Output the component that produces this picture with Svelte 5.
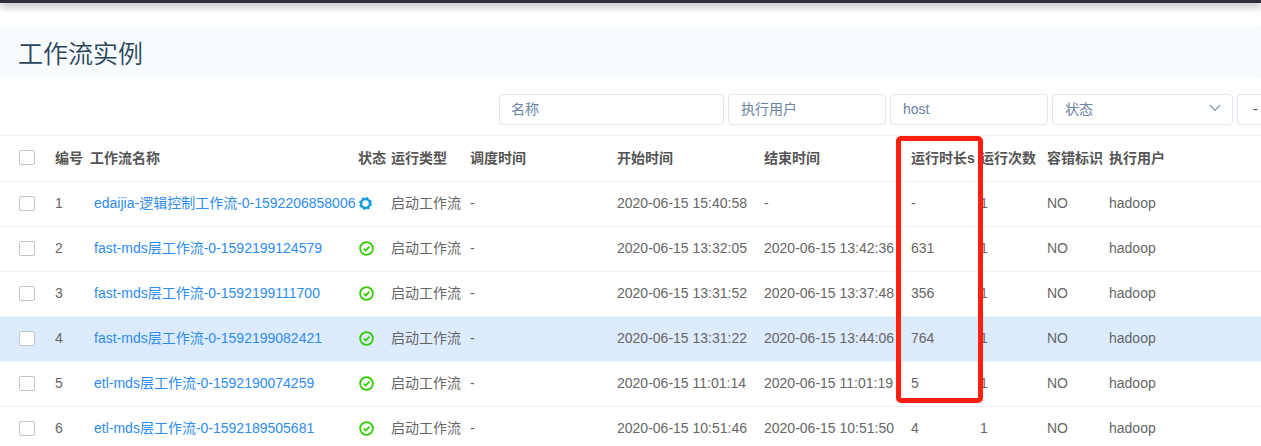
<script lang="ts">
  interface Instance {
    id: number;
    name: string;
    state: "running" | "success";
    start: string;
    end: string;
    duration: string;
    host: string;
  }

  const instances: Instance[] = [
    { id: 1, name: "edaijia-逻辑控制工作流-0-1592206858006", state: "running", start: "2020-06-15 15:40:58", end: "-", duration: "-", host: "hadoop" },
    { id: 2, name: "fast-mds层工作流-0-1592199124579", state: "success", start: "2020-06-15 13:32:05", end: "2020-06-15 13:42:36", duration: "631", host: "hadoop" },
    { id: 3, name: "fast-mds层工作流-0-1592199111700", state: "success", start: "2020-06-15 13:31:52", end: "2020-06-15 13:37:48", duration: "356", host: "hadoop" },
    { id: 4, name: "fast-mds层工作流-0-1592199082421", state: "success", start: "2020-06-15 13:31:22", end: "2020-06-15 13:44:06", duration: "764", host: "hadoop" },
    { id: 5, name: "etl-mds层工作流-0-1592190074259", state: "success", start: "2020-06-15 11:01:14", end: "2020-06-15 11:01:19", duration: "5", host: "hadoop" },
    { id: 6, name: "etl-mds层工作流-0-1592189505681", state: "success", start: "2020-06-15 10:51:46", end: "2020-06-15 10:51:50", duration: "4", host: "hadoop" },
  ];

  let active = $state(4);
  let selected: number[] = $state([]);
  let name = $state("");
  let user = $state("");
  let host = $state("");
  let range = $state("-");

  const toggleAll = () => {
    selected = selected.length === instances.length ? [] : instances.map((i) => i.id);
  };
</script>

<div class="page">
  <div class="navbar"></div>

  <h1 class="title">工作流实例</h1>

  <form class="filters">
    <input class="field name" type="text" placeholder="名称" aria-label="名称" bind:value={name} />
    <input class="field" type="text" placeholder="执行用户" aria-label="执行用户" bind:value={user} />
    <input class="field" type="text" placeholder="host" aria-label="host" bind:value={host} />
    <div class="select-box">
      <select class="field" aria-label="状态">
        <option>状态</option>
      </select>
      <svg class="arrow" viewBox="0 0 12 8" width="12" height="8">
        <path d="M1 1.2 6 6.4 11 1.2" />
      </svg>
    </div>
    <input class="field range" type="text" aria-label="时间" readonly bind:value={range} />
  </form>

  <table>
    <colgroup>
      <col class="c-check" />
      <col class="c-id" />
      <col class="c-name" />
      <col class="c-state" />
      <col class="c-type" />
      <col class="c-time" />
      <col class="c-time" />
      <col class="c-time" />
      <col class="c-duration" />
      <col class="c-count" />
      <col class="c-fault" />
      <col />
    </colgroup>
    <thead>
      <tr>
        <th class="check">
          <input
            type="checkbox"
            aria-label="全选"
            checked={selected.length === instances.length}
            onchange={toggleAll}
          />
        </th>
        <th>编号</th>
        <th>工作流名称</th>
        <th>状态</th>
        <th>运行类型</th>
        <th>调度时间</th>
        <th>开始时间</th>
        <th>结束时间</th>
        <th class="marked">运行时长s<span class="marker"></span></th>
        <th>运行次数</th>
        <th>容错标识</th>
        <th>执行用户</th>
      </tr>
    </thead>
    <tbody>
      {#each instances as item (item.id)}
        <tr class:active={active === item.id} onmouseenter={() => (active = item.id)}>
          <td class="check">
            <input type="checkbox" aria-label={item.name} value={item.id} bind:group={selected} />
          </td>
          <td>{item.id}</td>
          <td class="link"><a href="#{item.id}">{item.name}</a></td>
          <td class="state">
            {#if item.state === "running"}
              <svg viewBox="0 0 16 16" width="15" height="15">
                <circle class="teeth" cx="8" cy="8" r="5.9" />
                <circle class="gear" cx="8" cy="8" r="4.7" />
              </svg>
            {:else}
              <svg viewBox="0 0 16 16" width="17" height="17">
                <circle class="ring" cx="8" cy="8" r="6" />
                <path class="tick" d="M5.3 8.1 7.3 9.9 10.7 6.2" />
              </svg>
            {/if}
          </td>
          <td>启动工作流</td>
          <td>-</td>
          <td>{item.start}</td>
          <td>{item.end}</td>
          <td>{item.duration}</td>
          <td>1</td>
          <td>NO</td>
          <td>{item.host}</td>
        </tr>
      {/each}
    </tbody>
  </table>
</div>

<style>
  .page {
    height: 100vh;
    overflow: hidden;
    background: #fff;
    color: #666;
    font-family: "Liberation Sans", Arial, "Noto Sans CJK SC", sans-serif;
    font-size: 14px;
  }

  .navbar {
    height: 3px;
    background: #2d303c;
    box-shadow: 0 2px 8px rgba(0, 0, 0, 0.6);
  }

  .title {
    margin: 22px 0 15px;
    padding-left: 18px;
    height: 54px;
    line-height: 58px;
    border-radius: 3px;
    background: #f7fbfe;
    color: #2a455b;
    font-size: 25px;
    font-weight: 350;
  }

  .filters {
    display: flex;
    justify-content: flex-end;
    gap: 4px;
    /* the date range runs past the right edge */
    margin: 0 -216px 10px 0;
  }

  .field {
    box-sizing: border-box;
    width: 158px;
    height: 31px;
    padding: 0 12px 2px;
    border: 1px solid #dfe6f0;
    border-radius: 4px;
    background: #fff;
    color: #6a82a3;
    font: inherit;
    outline: none;
  }

  .field::placeholder {
    color: #6a82a3;
    opacity: 1;
  }

  .field.name {
    width: 225px;
    padding-left: 11px;
  }

  .field.range {
    width: 240px;
    padding-left: 15px;
    color: #3c4a5c;
  }

  .select-box {
    position: relative;
  }

  .select-box .field {
    display: block;
    width: 181px;
    appearance: none;
  }

  .arrow {
    position: absolute;
    top: 10px;
    right: 12px;
    pointer-events: none;
    fill: none;
    stroke: #7a8ba3;
    stroke-width: 1.2;
  }

  table {
    width: 100%;
    border-collapse: separate;
    border-spacing: 0;
    table-layout: fixed;
    border-top: 1px solid #ebf0fa;
  }

  .c-check {
    width: 55px;
  }
  .c-id {
    width: 35px;
  }
  .c-name {
    width: 268px;
  }
  .c-state {
    width: 33px;
  }
  .c-type {
    width: 79px;
  }
  .c-time {
    width: 147px;
  }
  .c-duration {
    width: 69px;
  }
  .c-count {
    width: 67px;
  }
  .c-fault {
    width: 62px;
  }

  th,
  td {
    box-sizing: border-box;
    height: 45px;
    padding: 0 0 2px;
    border-bottom: 1px solid #ebf0fa;
    line-height: 20px;
    text-align: left;
    white-space: nowrap;
  }

  th {
    height: 46px;
    color: #555;
    font-weight: bold;
  }

  .active td {
    background: #ddebff;
  }

  .check {
    padding-left: 19px;
  }

  .check input {
    display: block;
    appearance: none;
    box-sizing: border-box;
    width: 16px;
    height: 15px;
    margin: 0;
    border: 1px solid #c4c4c4;
    border-radius: 2px;
    background: #fff;
  }

  .check input:checked {
    background: #2d8cf0;
  }

  .link {
    padding-left: 4px;
  }

  .link a {
    color: #2d8cf0;
    text-decoration: none;
  }

  .state svg {
    display: block;
    fill: none;
  }

  .teeth {
    stroke: #0d9ae0;
    stroke-width: 2;
    stroke-dasharray: 2.4 2.234;
  }

  .gear {
    stroke: #0d9ae0;
    stroke-width: 2.4;
  }

  .ring,
  .tick {
    stroke: #33cc00;
    stroke-width: 1.7;
  }

  .marked {
    position: relative;
  }

  .marker {
    position: absolute;
    z-index: 1;
    top: 0;
    left: -15px;
    box-sizing: border-box;
    width: 87px;
    height: 267px;
    border: 5px solid #ff1f10;
    border-radius: 5px;
    pointer-events: none;
  }
</style>
